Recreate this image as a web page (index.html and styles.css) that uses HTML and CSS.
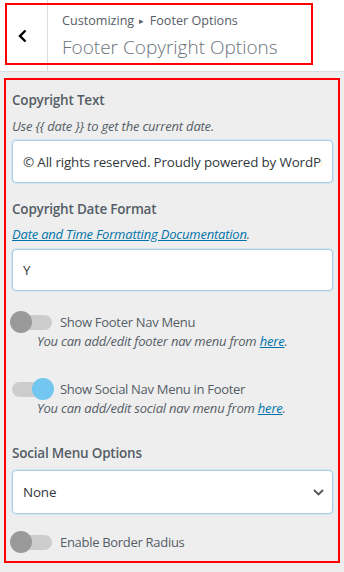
FILE: index.html
```html
<!DOCTYPE html>
<html lang="en">
<head>
    <meta charset="UTF-8">
    <meta name="viewport" content="width=device-width, initial-scale=1.0">
    <title>Footer Copyright Options</title>
    <link rel="stylesheet" href="styles.css">
</head>
<body>
    <div class="section-header">
        <button class="back-btn" type="button" aria-label="Back">
            <svg width="9" height="14" viewBox="0 0 9 14">
                <polyline points="7.5,1.5 2,7 7.5,12.5" fill="none" stroke="#000" stroke-width="2.4" />
            </svg>
        </button>
        <div class="section-title">
            <span class="crumbs">Customizing <span class="crumb-sep">&#9656;</span> Footer Options</span>
            <h3>Footer Copyright Options</h3>
        </div>
        <div class="mark mark-header"></div>
    </div>

    <ul class="controls">
        <li class="control control-copyright">
            <span class="control-title">Copyright Text</span>
            <span class="description">Use {{ date }} to get the current date.</span>
            <input class="text-field" type="text" value="&copy; All rights reserved. Proudly powered by WordPress">
        </li>

        <li class="control control-date">
            <span class="control-title">Copyright Date Format</span>
            <span class="description"><a href="#">Date and Time Formatting Documentation</a>.</span>
            <input class="text-field" type="text" value="Y">
        </li>

        <li class="control control-toggle toggle-footer-nav">
            <label class="toggle">
                <span class="track"><span class="knob"></span></span>
                <span class="toggle-label">Show Footer Nav Menu</span>
            </label>
            <span class="description toggle-desc">You can add/edit footer nav menu from <a href="#">here</a>.</span>
        </li>

        <li class="control control-toggle toggle-social-nav">
            <label class="toggle">
                <span class="track on"><span class="knob"></span></span>
                <span class="toggle-label">Show Social Nav Menu in Footer</span>
            </label>
            <span class="description toggle-desc">You can add/edit social nav menu from <a href="#">here</a>.</span>
        </li>

        <li class="control control-select">
            <span class="control-title">Social Menu Options</span>
            <div class="select-wrap">
                <select class="select-field">
                    <option>None</option>
                </select>
                <svg class="select-arrow" width="11" height="7" viewBox="0 0 11 7">
                    <polyline points="1,1 5.5,5.5 10,1" fill="none" stroke="#555" stroke-width="1.8" />
                </svg>
            </div>
        </li>

        <li class="control control-toggle toggle-radius">
            <label class="toggle">
                <span class="track"><span class="knob"></span></span>
                <span class="toggle-label">Enable Border Radius</span>
            </label>
        </li>
    </ul>
</body>
</html>
```

FILE: styles.css
```css
* {
    box-sizing: border-box;
}

body {
    margin: 0;
    background-color: #eee;
    font-family: "Open Sans", "Noto Sans", sans-serif;
    color: #555d66;
}

/* header */

.section-header {
    position: relative;
    display: flex;
    height: 72px;
    background-color: #fff;
    border-bottom: 1px solid #ddd;
}

.back-btn {
    width: 48px;
    padding: 0 2px 0 0;
    background: none;
    border: none;
    border-right: 1px solid #ddd;
    display: flex;
    align-items: center;
    justify-content: center;
}

.back-btn svg {
    display: block;
}

.section-title {
    padding: 12px 0 0 14px;
}

.crumbs {
    display: block;
    font-size: 12.6px;
    line-height: 18px;
}

.crumb-sep {
    font-size: 9px;
    vertical-align: 1px;
    margin: 0 2px;
}

.section-title h3 {
    margin: 4px 0 0;
    font-size: 19px;
    font-weight: 300;
    line-height: 26px;
    color: #6b737b;
}

.mark {
    position: absolute;
    border: 2px solid #f00;
    pointer-events: none;
}

.mark-header {
    left: 5px;
    top: 3px;
    width: 308px;
    height: 62px;
}

/* controls */

.controls {
    list-style: none;
    margin: 6px 4px 9px;
    padding: 10px 5px 8px 6px;
    border: 2px solid #f00;
}

.control-title {
    display: block;
    font-size: 13.5px;
    font-weight: 600;
    letter-spacing: -0.2px;
    line-height: 20px;
}

.description {
    display: block;
    font-size: 13px;
    font-style: italic;
    letter-spacing: -0.2px;
    line-height: 18px;
}

.description a {
    color: #0073aa;
}

.control-copyright .description {
    margin-top: 7px;
}

.text-field,
.select-field {
    display: block;
    width: 100%;
    height: 43px;
    margin-top: 5px;
    padding: 0 10px;
    font-family: inherit;
    font-size: 13.4px;
    letter-spacing: -0.15px;
    color: #32373c;
    background-color: #fff;
    border: 1px solid #a9cfe6;
    border-radius: 4px;
    box-shadow: 0 0 0 1px #d3e7f3;
    outline: none;
}

.control-date {
    margin-top: 16px;
}

.control-date .description {
    margin-top: 6px;
}

.control-date .text-field {
    margin-top: 6px;
    height: 42px;
}

/* toggles */

.toggle-footer-nav {
    margin-top: 20px;
}

.toggle-social-nav {
    margin-top: 28px;
}

.toggle-radius {
    margin-top: 17px;
}

.toggle {
    display: flex;
    align-items: center;
    height: 22px;
}

.track {
    display: flex;
    align-items: center;
    width: 40px;
    height: 15px;
    border-radius: 8px;
    background-color: #ccc;
}

.knob {
    width: 22px;
    height: 22px;
    margin-left: -2px;
    border-radius: 50%;
    background-color: #999;
}

.track.on {
    justify-content: flex-end;
}

.track.on .knob {
    margin-left: 0;
    margin-right: -2px;
    background-color: #73c6ef;
}

.toggle-label {
    margin-left: 8px;
    font-size: 13px;
    letter-spacing: -0.3px;
    line-height: 20px;
}

.toggle-desc {
    margin: -1px 0 0 25px;
}

/* select */

.control-select {
    margin-top: 26px;
}

.select-wrap {
    position: relative;
    margin-top: 7px;
}

.select-field {
    height: 44px;
    margin-top: 0;
    appearance: none;
}

.select-arrow {
    position: absolute;
    right: 9px;
    top: 19px;
}
```
